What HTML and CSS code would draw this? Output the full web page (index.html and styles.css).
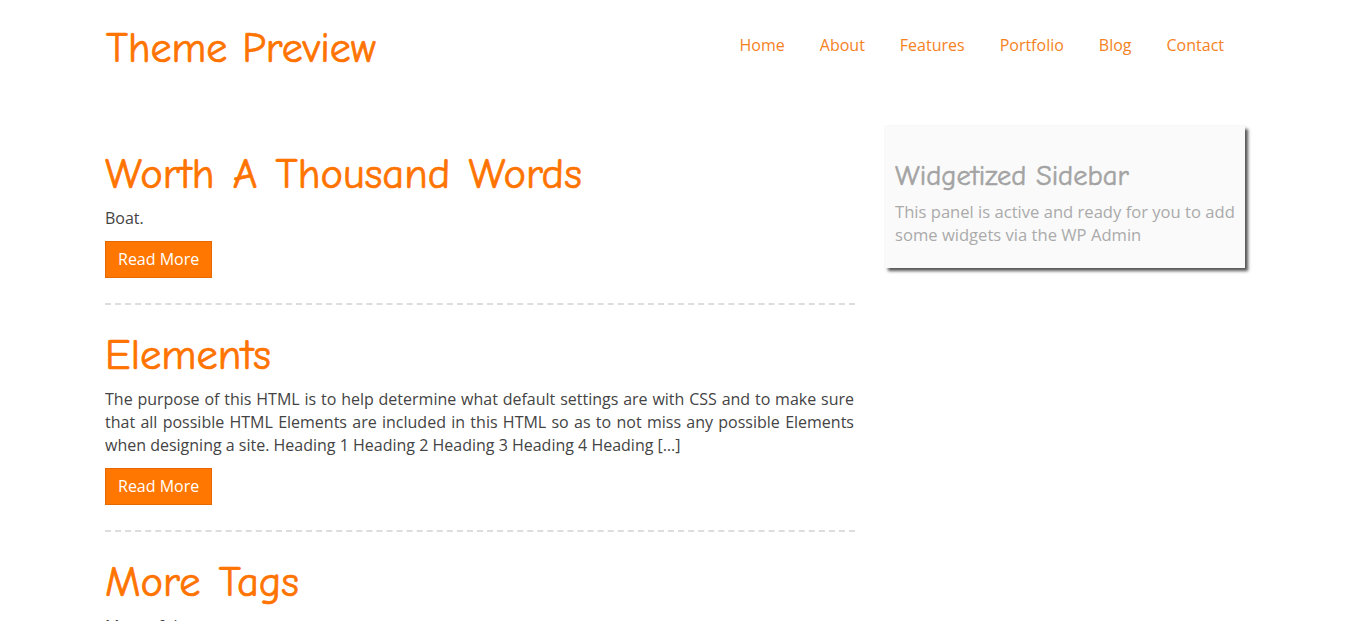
FILE: index.html
```html
<!DOCTYPE html>
<html lang="en">
<head>
    <meta charset="UTF-8">
    <meta name="viewport" content="width=device-width, initial-scale=1.0">
    <title>Theme Preview</title>
    <link rel="stylesheet" href="styles.css">
</head>
<body>
    <header class="site-header">
        <a class="site-title" href="#">Theme Preview</a>
        <nav class="site-nav">
            <a href="#">Home</a>
            <a href="#">About</a>
            <a href="#">Features</a>
            <a href="#">Portfolio</a>
            <a href="#">Blog</a>
            <a href="#">Contact</a>
        </nav>
    </header>

    <div class="site-content">
        <main class="post-list">
            <article class="post">
                <h2 class="post-title">Worth A Thousand Words</h2>
                <p class="post-excerpt">Boat.</p>
                <a class="read-more" href="#">Read More</a>
            </article>
            <article class="post">
                <h2 class="post-title">Elements</h2>
                <p class="post-excerpt">The purpose of this HTML is to help determine what default settings are with CSS and to make sure that all possible HTML Elements are included in this HTML so as to not miss any possible Elements when designing a site. Heading 1 Heading 2 Heading 3 Heading 4 Heading […]</p>
                <a class="read-more" href="#">Read More</a>
            </article>
            <article class="post">
                <h2 class="post-title">More Tags</h2>
                <p class="post-excerpt">More of the same tags</p>
            </article>
        </main>

        <aside class="sidebar">
            <h3 class="widget-title">Widgetized Sidebar</h3>
            <p class="widget-text">This panel is active and ready for you to add some widgets via the WP Admin</p>
        </aside>
    </div>
</body>
</html>
```

FILE: styles.css
```css
html, body {
    height: 621px;
    overflow: hidden;
}
body {
    margin: 0;
    background: #ffffff;
    color: #444444;
    font-family: 'Open Sans', sans-serif;
    font-size: 16px;
    line-height: 23px;
}
a {
    text-decoration: none;
}
.site-header {
    display: flex;
    justify-content: space-between;
    align-items: flex-start;
    padding: 25px 125px 0 106px;
    height: 101px;
    box-sizing: border-box;
}
.site-title {
    font-family: 'Comic Sans MS', 'Comic Neue', cursive;
    font-size: 42px;
    line-height: 48px;
    word-spacing: 1px;
    color: #ff7300;
    -webkit-text-stroke: 0.7px #ff7300;
}
.site-nav {
    display: flex;
    gap: 35px;
    padding-top: 9px;
}
.site-nav a {
    color: #f5821f;
}
.site-content {
    display: flex;
    gap: 30px;
    padding: 25px 104px 0 105px;
}
.post-list {
    width: 750px;
    flex-shrink: 0;
    margin-top: 24px;
    overflow: hidden;
}
.post {
    padding-bottom: 25px;
    margin-bottom: 26px;
    border-bottom: 2px dashed #dddddd;
}
.post:last-child {
    border-bottom: 0;
}
.post-title {
    margin: 0 0 7px;
    font-family: 'Comic Sans MS', 'Comic Neue', cursive;
    font-size: 42.5px;
    font-weight: normal;
    line-height: 50px;
    word-spacing: 4px;
    color: #ff7300;
    -webkit-text-stroke: 0.7px #ff7300;
}
.post-excerpt {
    margin: 0 1px 11px 0;
    text-align: justify;
}
.read-more {
    display: inline-block;
    padding: 6px 12px;
    border: 1px solid #e66800;
    background: #ff7700;
    color: #ffffff;
}
.sidebar {
    width: 360px;
    height: 142px;
    box-sizing: border-box;
    padding: 33px 10px 0;
    background: #fafafa;
    box-shadow: 3px 3px 3px #555555, 0 0 1px #dddddd;
    color: #aaaaaa;
}
.widget-title {
    margin: 0 0 7px;
    font-family: 'Comic Sans MS', 'Comic Neue', cursive;
    font-size: 28.5px;
    font-weight: normal;
    line-height: 34px;
    color: #a3a3a3;
    -webkit-text-stroke: 0.5px #a3a3a3;
}
.widget-text {
    margin: 0;
    font-size: 16.6px;
}
```
